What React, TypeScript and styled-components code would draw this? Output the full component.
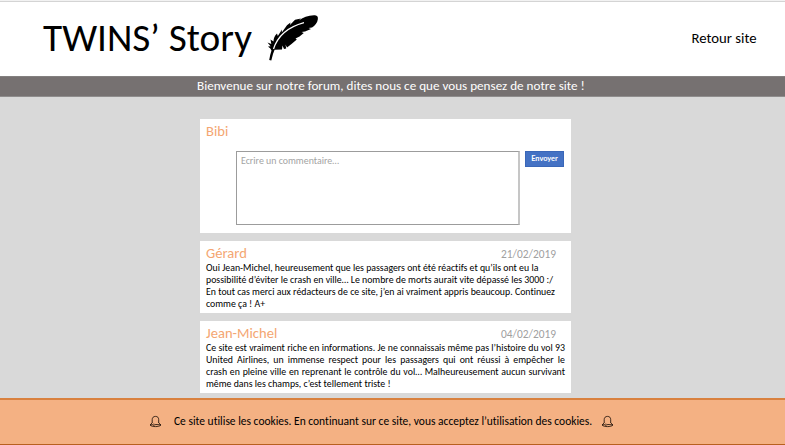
import React from "react";
import styled, { createGlobalStyle } from "styled-components";

const GlobalStyle = createGlobalStyle`
  * { box-sizing: border-box; }
  html, body, #root { height: 100%; }
  body {
    margin: 0;
    overflow: hidden;
    font-family: Carlito, Calibri, Lato, sans-serif;
    font-variant-ligatures: none;
    color: #000;
  }
`;

const Page = styled.div`
  display: flex;
  flex-direction: column;
  height: 445px;
  background: #d9d9d9;
`;

const Header = styled.header`
  display: flex;
  flex: none;
  align-items: flex-start;
  height: 76px;
  padding: 0 28.5px 0 43px;
  background: #fff;
  border-top: 1px solid #f2f2f2;
  box-shadow: inset 0 1px 0 #d4d4d4;
`;

const Title = styled.h1`
  width: 209px;
  margin: 13px 0 0;
  font-size: 39.28px;
  font-weight: 400;
  line-height: 48px;
  white-space: nowrap;
`;

const Feather = styled.svg`
  flex: none;
  width: 54px;
  height: 50px;
  margin: 12px 0 0 14px;
`;

const BackLink = styled.a`
  margin: 27px 0 0 auto;
  font-size: 14.73px;
  line-height: 20px;
`;

const Banner = styled.div`
  flex: none;
  height: 21px;
  padding-left: 197px;
  background: #767171;
  border-top: 1px solid #83807f;
  border-bottom: 1px solid #8f8d8d;
  color: #fff;
  font-size: 13.13px;
  line-height: 18px;
  white-space: nowrap;
`;

const Feed = styled.main`
  display: flex;
  flex: 1;
  flex-direction: column;
  gap: 8px;
  width: 371px;
  margin: 22px 0 0 200px;
`;

const Card = styled.section<{ $height: number }>`
  flex: none;
  height: ${({ $height }) => $height}px;
  padding: 4px 6px 0;
  background: #fff;
`;

const CardHead = styled.div`
  display: flex;
  justify-content: space-between;
  align-items: baseline;
  height: 17px;
  padding-right: 9px;
  line-height: 17px;
`;

const Author = styled.h2`
  margin: 0;
  color: #f4a672;
  font-size: 14.6px;
  font-weight: 400;
`;

const PostDate = styled.time`
  color: #a0a0a0;
  font-size: 11.4px;
`;

const Message = styled.p`
  margin: 1px 0 0;
  font-size: 9.84px;
  line-height: 11.9px;
`;

const Line = styled.span<{ $justify?: boolean }>`
  display: block;
  width: 359px;
  white-space: ${({ $justify }) => ($justify ? "normal" : "nowrap")};
  text-align-last: ${({ $justify }) => ($justify ? "justify" : "left")};
`;

const Composer = styled.form`
  display: flex;
  align-items: flex-start;
  gap: 5px;
  margin: 11px 0 0 30px;
`;

const CommentBox = styled.textarea`
  display: block;
  width: 284px;
  height: 74px;
  margin: 0;
  padding: 3px 4px;
  border: 1px solid #9c9c9c;
  border-right: 2px solid #c6c6c6;
  border-radius: 0;
  outline: none;
  resize: none;
  background: #fff;
  font: 9.88px/12px Carlito, Calibri, Lato, sans-serif;
  &::placeholder { color: #a3a3a3; opacity: 1; }
`;

const SendButton = styled.button`
  width: 39px;
  height: 16px;
  margin: 0;
  padding: 0;
  border: 1px solid #3a67b8;
  border-radius: 0;
  background: #4472c4;
  color: #fff;
  font: 700 7.4px/14px Lato, sans-serif;
`;

const CookieBar = styled.footer`
  display: flex;
  flex: none;
  align-items: center;
  height: 47px;
  padding: 0 0 2px 149px;
  background: #f4b183;
  border-top: 2px solid #d9813f;
  border-bottom: 1px solid #b8601f;
  font-size: 11.49px;
  line-height: 16px;
  white-space: nowrap;
`;

const CookieText = styled.span`
  width: 418px;
  margin: 0 9px 0 12px;
`;

const BellSvg = styled.svg`
  flex: none;
  width: 13px;
  height: 13px;
`;

const Bell = () => (
  <BellSvg viewBox="0 0 13 13" fill="none" stroke="#2a1a10" strokeWidth="0.9">
    <path d="M3.2 8V4.700C3.200 2.500 4.500 1.400 6.500 1.400s3.200 1.100 3.200 3.300V8" />
    <path d="M3.200 7.800 1 10c1.400 1.200 3.200 1.600 5.500 1.600S10.700 11.200 12 10L9.700 7.800" />
    <path d="M1.200 9.800h2.300l1.200-1.200M4 10.300l3-.8 4.800.4" />
  </BellSvg>
);

interface Post {
  author: string;
  date: string;
  lines: string[];
  justified?: boolean;
}

const posts: Post[] = [
  {
    author: "Gérard",
    date: "21/02/2019",
    lines: [
      "Oui Jean-Michel, heureusement que les passagers ont été réactifs et qu’ils ont eu la",
      "possibilité d’éviter le crash en ville… Le nombre de morts aurait vite dépassé les 3000 :/",
      "En tout cas merci aux rédacteurs de ce site, j’en ai vraiment appris beaucoup. Continuez",
      "comme ça ! A+",
    ],
  },
  {
    author: "Jean-Michel",
    date: "04/02/2019",
    justified: true,
    lines: [
      "Ce site est vraiment riche en informations. Je ne connaissais même pas l’histoire du vol 93",
      "United Airlines, un immense respect pour les passagers qui ont réussi à empêcher le",
      "crash en pleine ville en reprenant le contrôle du vol… Malheureusement aucun survivant",
      "même dans les champs, c’est tellement triste !",
    ],
  },
];

export default function App() {
  return (
    <Page>
      <GlobalStyle />
      <Header>
        <Title>TWINS’ Story</Title>
        <Feather viewBox="0 0 54 50" aria-hidden="true">
          <path d="M3.200 47 4.200 42 5.500 37.500 4.300 35.500 2 33.500 4.600 33.300 1.500 29.500 5.300 31 4.500 26.500 7.500 28.500C7.600 25.500 8.500 22.800 11 20.500L11.800 23 16 16.500 15.800 19.500 21 12.200 24.500 9.500 24 12 29 6.800 35 5.500 32.500 7.800C37 4.200 43 2 49 2.300 51.500 2.500 52.200 4 51.800 6.500 51.300 10 49 12.500 46 14.500L42.500 15 45 16 39 18.500 35.500 19 37.800 20 33.500 23.500 29.500 25.500 30.800 26.500 25.500 31 21 34.500 19.500 31.500 20.200 35.500 18 36 16.500 32.500 16 36.500 8.600 36.800 7 41 5.300 47.500Z" />
          <path d="M7.500 36C11 25 20 14.500 38 9.600" fill="none" stroke="#fff" strokeWidth="1.300" />
        </Feather>
        <BackLink>Retour site</BackLink>
      </Header>
      <Banner>Bienvenue sur notre forum, dites nous ce que vous pensez de notre site !</Banner>
      <Feed>
        <Card $height={114}>
          <CardHead>
            <Author>Bibi</Author>
          </CardHead>
          <Composer>
            <CommentBox placeholder="Ecrire un commentaire…" />
            <SendButton type="button">Envoyer</SendButton>
          </Composer>
        </Card>
        {posts.map((post) => (
          <Card key={post.author} $height={72}>
            <CardHead>
              <Author>{post.author}</Author>
              <PostDate>{post.date}</PostDate>
            </CardHead>
            <Message>
              {post.lines.map((line, i) => (
                <Line key={line} $justify={post.justified && i < post.lines.length - 1}>
                  {line}
                </Line>
              ))}
            </Message>
          </Card>
        ))}
      </Feed>
      <CookieBar>
        <Bell />
        <CookieText>
          Ce site utilise les cookies. En continuant sur ce site, vous acceptez l’utilisation des cookies.
        </CookieText>
        <Bell />
      </CookieBar>
    </Page>
  );
}
